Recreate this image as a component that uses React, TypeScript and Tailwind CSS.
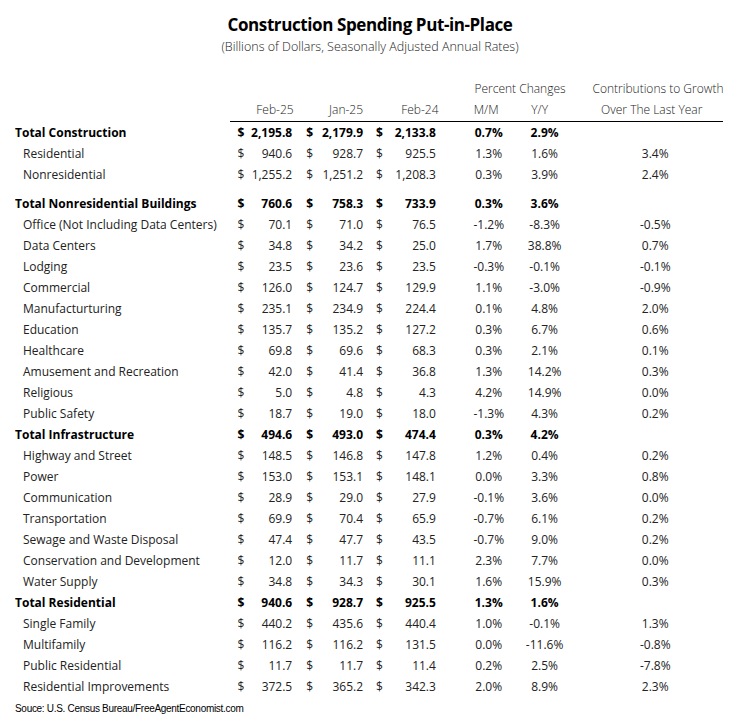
import React from "react";

type Row = {
  label: string;
  bold?: boolean;
  v: [string, string, string];
  mm: string;
  yy: string;
  c?: string;
  gapBefore?: boolean;
};

const rows: Row[] = [
  { label: "Total Construction", bold: true, v: ["2,195.8", "2,179.9", "2,133.8"], mm: "0.7%", yy: "2.9%" },
  { label: "Residential", v: ["940.6", "928.7", "925.5"], mm: "1.3%", yy: "1.6%", c: "3.4%" },
  { label: "Nonresidential", v: ["1,255.2", "1,251.2", "1,208.3"], mm: "0.3%", yy: "3.9%", c: "2.4%" },
  { label: "Total Nonresidential Buildings", bold: true, gapBefore: true, v: ["760.6", "758.3", "733.9"], mm: "0.3%", yy: "3.6%" },
  { label: "Office (Not Including Data Centers)", v: ["70.1", "71.0", "76.5"], mm: "-1.2%", yy: "-8.3%", c: "-0.5%" },
  { label: "Data Centers", v: ["34.8", "34.2", "25.0"], mm: "1.7%", yy: "38.8%", c: "0.7%" },
  { label: "Lodging", v: ["23.5", "23.6", "23.5"], mm: "-0.3%", yy: "-0.1%", c: "-0.1%" },
  { label: "Commercial", v: ["126.0", "124.7", "129.9"], mm: "1.1%", yy: "-3.0%", c: "-0.9%" },
  { label: "Manufacturturing", v: ["235.1", "234.9", "224.4"], mm: "0.1%", yy: "4.8%", c: "2.0%" },
  { label: "Education", v: ["135.7", "135.2", "127.2"], mm: "0.3%", yy: "6.7%", c: "0.6%" },
  { label: "Healthcare", v: ["69.8", "69.6", "68.3"], mm: "0.3%", yy: "2.1%", c: "0.1%" },
  { label: "Amusement and Recreation", v: ["42.0", "41.4", "36.8"], mm: "1.3%", yy: "14.2%", c: "0.3%" },
  { label: "Religious", v: ["5.0", "4.8", "4.3"], mm: "4.2%", yy: "14.9%", c: "0.0%" },
  { label: "Public Safety", v: ["18.7", "19.0", "18.0"], mm: "-1.3%", yy: "4.3%", c: "0.2%" },
  { label: "Total Infrastructure", bold: true, v: ["494.6", "493.0", "474.4"], mm: "0.3%", yy: "4.2%" },
  { label: "Highway and Street", v: ["148.5", "146.8", "147.8"], mm: "1.2%", yy: "0.4%", c: "0.2%" },
  { label: "Power", v: ["153.0", "153.1", "148.1"], mm: "0.0%", yy: "3.3%", c: "0.8%" },
  { label: "Communication", v: ["28.9", "29.0", "27.9"], mm: "-0.1%", yy: "3.6%", c: "0.0%" },
  { label: "Transportation", v: ["69.9", "70.4", "65.9"], mm: "-0.7%", yy: "6.1%", c: "0.2%" },
  { label: "Sewage and Waste Disposal", v: ["47.4", "47.7", "43.5"], mm: "-0.7%", yy: "9.0%", c: "0.2%" },
  { label: "Conservation and Development", v: ["12.0", "11.7", "11.1"], mm: "2.3%", yy: "7.7%", c: "0.0%" },
  { label: "Water Supply", v: ["34.8", "34.3", "30.1"], mm: "1.6%", yy: "15.9%", c: "0.3%" },
  { label: "Total Residential", bold: true, v: ["940.6", "928.7", "925.5"], mm: "1.3%", yy: "1.6%" },
  { label: "Single Family", v: ["440.2", "435.6", "440.4"], mm: "1.0%", yy: "-0.1%", c: "1.3%" },
  { label: "Multifamily", v: ["116.2", "116.2", "131.5"], mm: "0.0%", yy: "-11.6%", c: "-0.8%" },
  { label: "Public Residential", v: ["11.7", "11.7", "11.4"], mm: "0.2%", yy: "2.5%", c: "-7.8%" },
  { label: "Residential Improvements", v: ["372.5", "365.2", "342.3"], mm: "2.0%", yy: "8.9%", c: "2.3%" },
];

const font = { fontFamily: '"Open Sans", "Noto Sans", sans-serif' };

export default function App() {
  return (
    <div className="w-[740px] h-[721px] bg-white text-[#111] overflow-hidden" style={font}>
      <div className="pt-[13px] text-center text-[17px] font-bold leading-[24px] tracking-[-0.4px] text-black">
        Construction Spending Put-in-Place
      </div>
      <div className="text-center text-[12.5px] leading-[20px] font-light text-[#222]">
        (Billions of Dollars, Seasonally Adjusted Annual Rates)
      </div>
      <div className="mt-[21px] flex text-[12px] leading-[21px] font-light text-[#222]">
        <div className="w-[464px]" />
        <div className="w-[112px] text-center">Percent Changes</div>
        <div className="w-[164px] text-center">Contributions to Growth</div>
      </div>
      <div className="flex text-[12px] leading-[21px] font-light text-[#222]">
        <div className="w-[232px]" />
        <div className="w-[68px] text-right pr-[4px]">Feb-25</div>
        <div className="w-[70px] text-right pr-[4px]">Jan-25</div>
        <div className="w-[72px] text-right">Feb-24</div>
        <div className="w-[18px]" />
        <div className="w-[60px] text-center">M/M</div>
        <div className="w-[48px] text-center">Y/Y</div>
        <div className="w-[178px] text-center">Over The Last Year</div>
      </div>
      <div className="ml-[230px] w-[493px] h-px bg-black mt-[1px]" />
      <div className="text-[12px] leading-[21px]">
        {rows.map((r, i) => (
          <div
            key={i}
            className={`flex ${r.gapBefore ? "mt-[8px]" : ""} ${r.bold ? "font-bold text-black" : "font-normal text-[#222]"}`}
          >
            <div className={`w-[232px] whitespace-nowrap ${r.bold ? "pl-[15px]" : "pl-[23px]"}`}>{r.label}</div>
            <div className="w-[68px] flex justify-between pl-[6px] pr-[7px]">
              <span>$</span>
              <span>{r.v[0]}</span>
            </div>
            <div className="w-[70px] flex justify-between pl-[7px] pr-[6px]">
              <span>$</span>
              <span>{r.v[1]}</span>
            </div>
            <div className="w-[72px] flex justify-between pl-[7px] pr-[5px]">
              <span>$</span>
              <span>{r.v[2]}</span>
            </div>
            <div className="w-[18px]" />
            <div className="w-[60px] text-center">{r.mm}</div>
            <div className="w-[52px] text-center">{r.yy}</div>
            <div className="w-[170px] text-center">{r.c ?? ""}</div>
          </div>
        ))}
      </div>
      <div
        className="pl-[15px] pt-[6px] text-[10px] leading-[12px] tracking-[-0.3px] text-black"
        style={{ fontFamily: '"Liberation Sans", Arial, sans-serif' }}
      >
        Souce: U.S. Census Bureau/FreeAgentEconomist.com
      </div>
    </div>
  );
}
